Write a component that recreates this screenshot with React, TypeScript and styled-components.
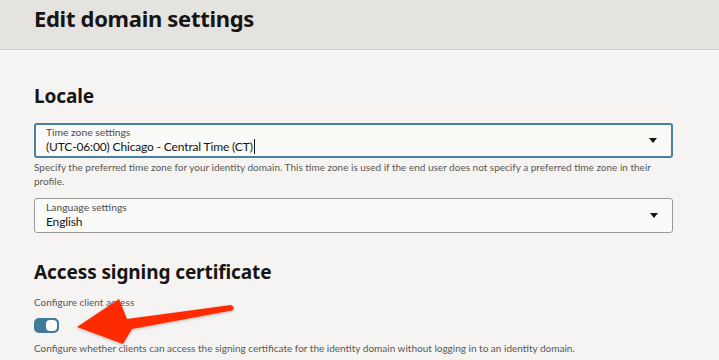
import React from "react";
import styled, { createGlobalStyle } from "styled-components";

const GlobalStyle = createGlobalStyle`
  html, body {
    margin: 0;
    padding: 0;
    background: #f5f4f2;
    font-family: "Lato", "Noto Sans", sans-serif;
    color: #161513;
  }
`;

type SelectProps = {
  label: string;
  value: string;
  focused?: boolean;
  caret?: boolean;
};

const SelectField: React.FC<SelectProps> = ({ label, value, focused, caret }) => (
  <Field $focused={focused}>
    <FieldText>
      <FieldLabel>{label}</FieldLabel>
      <FieldValue>
        {value}
        {caret && <Caret />}
      </FieldValue>
    </FieldText>
    <DropIcon viewBox="0 0 10 6">
      <path d="M0 0 H10 L5 6 Z" fill="#161513" />
    </DropIcon>
  </Field>
);

const App: React.FC = () => {
  return (
    <>
      <GlobalStyle />
      <Page>
        <Header>
          <Title>Edit domain settings</Title>
        </Header>
        <Body>
          <SectionTitle>Locale</SectionTitle>
          <SelectField
            label="Time zone settings"
            value="(UTC-06:00) Chicago - Central Time (CT)"
            focused
            caret
          />
          <Help>
            Specify the preferred time zone for your identity domain. This time zone is used if the end user does not
            specify a preferred time zone in their profile.
          </Help>
          <Spacer />
          <SelectField label="Language settings" value="English" />
          <SectionTitle $top={26} $bottom={10}>
            Access signing certificate
          </SectionTitle>
          <ToggleLabel>Configure client access</ToggleLabel>
          <Toggle>
            <Knob />
          </Toggle>
          <Help $top={8}>
            Configure whether clients can access the signing certificate for the identity domain without logging in to
            an identity domain.
          </Help>
        </Body>
        <Arrow viewBox="0 0 719 360">
          <defs>
            <filter id="shadow" x="-10%" y="-30%" width="130%" height="160%">
              <feDropShadow dx="0" dy="1" stdDeviation="1.5" floodColor="#000" floodOpacity="0.25" />
            </filter>
          </defs>
          <path
            d="M77 327 L119 299 L127 319 L231 305 Q236 307.5 232 310.5 L132 329 L123 344 Z"
            fill="#ff2a00"
            filter="url(#shadow)"
          />
        </Arrow>
      </Page>
    </>
  );
};

export default App;

const Page = styled.div`
  position: relative;
  width: 719px;
  height: 360px;
  overflow: hidden;
`;

const Header = styled.div`
  height: 50px;
  background: #e4e3e0;
  border-bottom: 1px solid #cfcdca;
  box-sizing: border-box;
  padding: 4px 34px 0;
`;

const Title = styled.h1`
  margin: 0;
  font-family: "Noto Sans", sans-serif;
  font-size: 22px;
  font-weight: 700;
  line-height: 29px;
  letter-spacing: -0.3px;
  color: #161513;
`;

const Body = styled.div`
  padding: 33px 46px 0 34px;
`;

const SectionTitle = styled.h2<{ $top?: number; $bottom?: number }>`
  margin: ${(p) => p.$top ?? 0}px 0 ${(p) => p.$bottom ?? 14}px;
  font-family: "Noto Sans", sans-serif;
  font-size: 19px;
  font-weight: 700;
  line-height: 26px;
  letter-spacing: -0.1px;
  color: #161513;
`;

const Field = styled.div<{ $focused?: boolean }>`
  display: flex;
  align-items: center;
  height: 35px;
  box-sizing: border-box;
  padding: 0 14px 0 ${(p) => (p.$focused ? 10 : 11)}px;
  background: #fafaf9;
  border: ${(p) => (p.$focused ? "2px solid #4c809f" : "1px solid #9c9a97")};
  border-radius: 3px;
`;

const FieldText = styled.div`
  flex: 1;
  display: flex;
  flex-direction: column;
`;

const FieldLabel = styled.span`
  font-size: 10.3px;
  line-height: 12px;
  color: #4f4d4a;
`;

const FieldValue = styled.span`
  display: flex;
  align-items: center;
  font-size: 12px;
  line-height: 17px;
  letter-spacing: -0.15px;
  color: #161513;
`;

const Caret = styled.span`
  display: inline-block;
  width: 1px;
  height: 15px;
  background: #161513;
  margin-left: 1px;
`;

const DropIcon = styled.svg`
  width: 8px;
  height: 5px;
`;

const Help = styled.p<{ $top?: number }>`
  margin: ${(p) => p.$top ?? 2}px 0 0;
  max-width: 625px;
  font-size: 10px;
  line-height: 14px;
  color: #5a5856;
`;

const Spacer = styled.div`
  height: 10px;
`;

const ToggleLabel = styled.div`
  font-size: 10px;
  line-height: 14px;
  color: #5a5856;
  margin-bottom: 9px;
`;

const Toggle = styled.div`
  display: flex;
  justify-content: flex-end;
  align-items: center;
  width: 25px;
  height: 15px;
  padding: 0 2px;
  box-sizing: border-box;
  border-radius: 5px;
  background: #3f7a9b;
`;

const Knob = styled.div`
  width: 11px;
  height: 11px;
  border-radius: 4px;
  background: #ffffff;
`;

const Arrow = styled.svg`
  position: absolute;
  left: 0;
  top: 0;
  width: 719px;
  height: 360px;
  pointer-events: none;
`;
